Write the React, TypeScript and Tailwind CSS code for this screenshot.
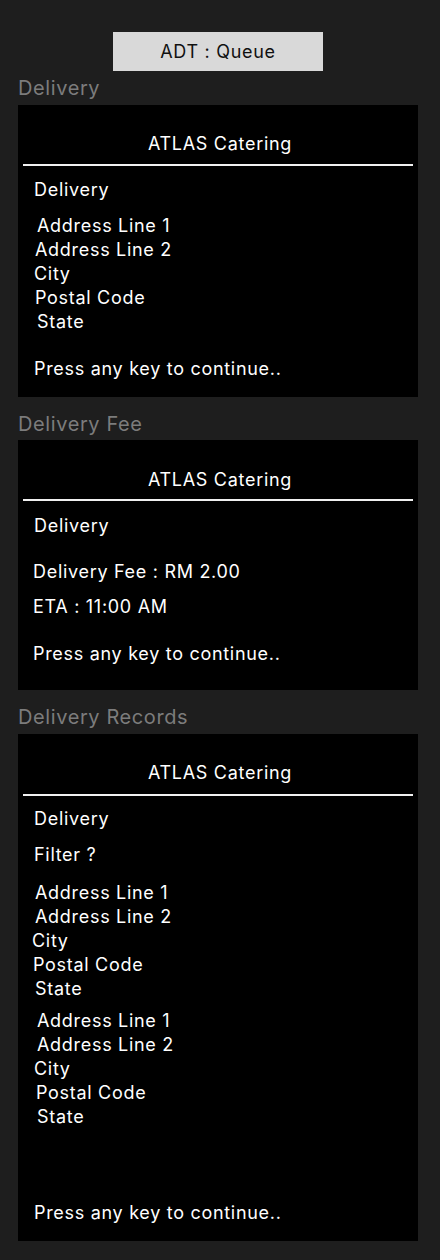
import React from "react";

const font = { fontFamily: "Inter, 'Noto Sans', sans-serif" };

function Line({ children, className = "" }: { children: React.ReactNode; className?: string }) {
  return <div className={`text-[18px] leading-6 tracking-[0.7px] text-white ${className}`}>{children}</div>;
}

function Header({ pt, lineMt }: { pt: string; lineMt: string }) {
  return (
    <>
      <div className={`${pt} pl-1 text-center text-[18px] leading-6 tracking-[0.7px] text-white`}>ATLAS Catering</div>
      <div className={`${lineMt} mx-[5px] h-[2px] bg-[#f0f0f0]`} />
    </>
  );
}

function Address({ offsets }: { offsets: string[] }) {
  const items = ["Address Line 1", "Address Line 2", "City", "Postal Code", "State"];
  return (
    <div>
      {items.map((t, i) => (
        <Line key={t} className={offsets[i]}>
          {t}
        </Line>
      ))}
    </div>
  );
}

export default function App() {
  return (
    <div className="min-h-[1260px] w-[440px] bg-[#1e1e1e] pl-[18px] pr-[22px] pt-8" style={font}>
      <div className="mx-auto flex h-[39px] w-[210px] items-center justify-center bg-[#d9d9d9] text-[18px] tracking-[0.7px] text-[#111]">
        ADT : Queue
      </div>

      <div className="mt-[5px] text-[20px] leading-6 tracking-[0.6px] text-[#7c7c7c]">Delivery</div>
      <div className="mt-[5px] bg-black pb-4">
        <Header pt="pt-[27px]" lineMt="mt-2" />
        <Line className="mt-3 pl-4">Delivery</Line>
        <div className="mt-3">
          <Address offsets={["pl-[19px]", "pl-[17px]", "pl-4", "pl-[17px]", "pl-[19px]"]} />
        </div>
        <Line className="mt-[23px] pl-4">Press any key to continue..</Line>
      </div>

      <div className="mt-[15px] text-[20px] leading-6 tracking-[0.6px] text-[#7c7c7c]">Delivery Fee</div>
      <div className="mt-1 bg-black pb-6">
        <Header pt="pt-[28px]" lineMt="mt-[7px]" />
        <Line className="mt-[13px] pl-4">Delivery</Line>
        <Line className="mt-[22px] pl-[15px]">Delivery Fee : RM 2.00</Line>
        <Line className="mt-[11px] pl-[15px]">ETA : 11:00 AM</Line>
        <Line className="mt-[23px] pl-[15px]">Press any key to continue..</Line>
      </div>

      <div className="mt-[15px] text-[20px] leading-6 tracking-[0.6px] text-[#7c7c7c]">Delivery Records</div>
      <div className="mt-[5px] bg-black pb-4">
        <Header pt="pt-[27px]" lineMt="mt-[9px]" />
        <Line className="mt-[11px] pl-4">Delivery</Line>
        <Line className="mt-3 pl-4">Filter ?</Line>
        <div className="mt-[14px]">
          <Address offsets={["pl-[17px]", "pl-[17px]", "pl-[14px]", "pl-[15px]", "pl-[17px]"]} />
        </div>
        <div className="mt-2">
          <Address offsets={["pl-[19px]", "pl-[19px]", "pl-4", "pl-[18px]", "pl-[19px]"]} />
        </div>
        <Line className="mt-[72px] pl-4">Press any key to continue..</Line>
      </div>
    </div>
  );
}
